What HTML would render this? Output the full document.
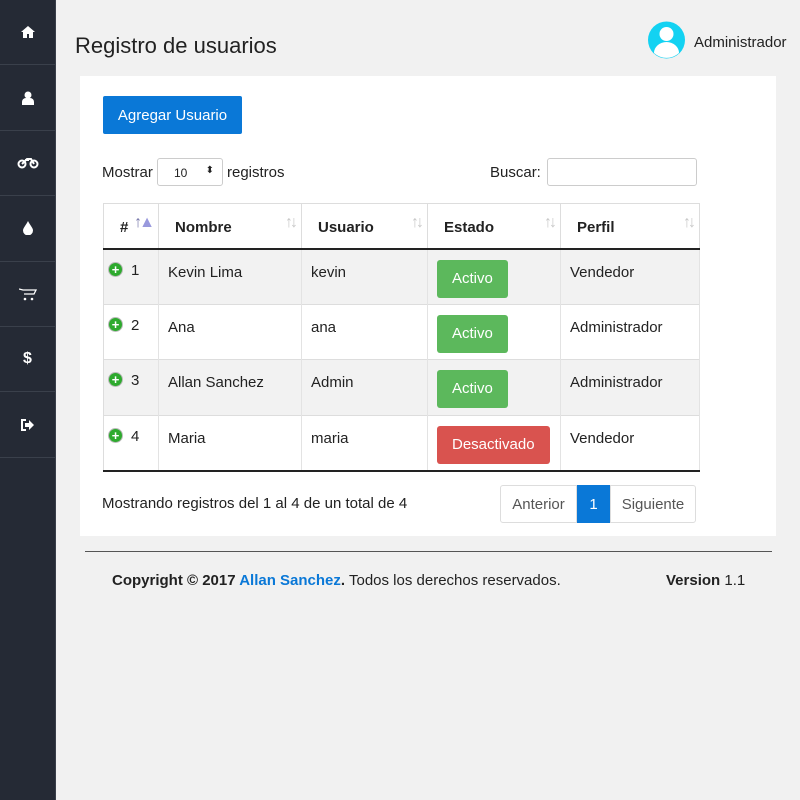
<!DOCTYPE html>
<html><head><meta charset="utf-8"><style>
*{box-sizing:border-box;margin:0;padding:0}
body{width:800px;height:800px;background:#f1f1f1;font-family:"Liberation Sans",sans-serif;color:#222;position:relative;overflow:hidden}
.sb{position:absolute;left:0;top:0;width:56px;height:800px;background:#252a35;border-right:1px solid #3a3f4a}
.sb div{height:65.4px;border-bottom:1px solid #3a404b;display:flex;align-items:center;justify-content:center;color:#fff;font-size:14px;font-weight:bold}
h1{position:absolute;left:75px;top:33px;font-size:22px;font-weight:normal;color:#222}
.user{position:absolute;left:648px;top:20px;display:flex;align-items:center;font-size:15px}
.card{position:absolute;left:80px;top:76px;width:696px;height:460px;background:#fff}
.btn{position:absolute;left:23px;top:20px;width:139px;height:38px;background:#0a78d7;color:#fff;font-size:15px;display:flex;align-items:center;justify-content:center;border-radius:2px}
.abs{position:absolute;font-size:15px}
table{position:absolute;left:23px;top:127px;width:597px;border-collapse:collapse;font-size:15px}
th{height:45px;text-align:left;font-weight:bold;border-bottom:2px solid #222;border-top:1px solid #ddd;border-right:1px solid #ddd;padding-left:16px;padding-top:3px;position:relative}
th .s{position:absolute;right:6px;top:10px;color:#c8c8c8;font-size:16px;font-weight:normal;letter-spacing:-3px}
td{height:55.5px;vertical-align:top;padding:14px 0 0 9px;border-right:1px solid #e3e3e3;border-top:1px solid #ddd}
tr:nth-child(odd) td{background:#f2f2f2}
tbody tr:last-child td{border-bottom:2px solid #222}
th:first-child,td:first-child{border-left:1px solid #ddd}
.pl{display:inline-block;width:15px;height:15px;border-radius:50%;background:#2eaa2e;border:1px solid #bbb;color:#fff;font-size:13px;line-height:13px;text-align:center;font-weight:bold;margin-right:8px;vertical-align:1px}
td:first-child{padding-left:4px;padding-top:12px}
.st{display:inline-block;height:38px;line-height:38px;padding:0 15px;color:#fff;border-radius:3px;margin-top:-4px}
.pg{position:absolute;top:409px;height:38px;border:1px solid #ddd;display:flex;align-items:center;justify-content:center;font-size:15px;color:#555}
</style></head><body>
<div class="sb">
<div><svg width="14" height="12" viewBox="0 0 14 12"><path d="M7 0L0 6h2v6h4V8h2v4h4V6h2z" fill="#fff"/></svg></div>
<div><svg width="12" height="14" viewBox="0 0 12 14"><circle cx="6" cy="4" r="3.5" fill="#fff"/><path d="M0 14v-3a4 4 0 0 1 4-4h4a4 4 0 0 1 4 4v3z" fill="#fff"/></svg></div>
<div><svg width="22" height="12" viewBox="0 0 22 12"><circle cx="5" cy="7" r="3.5" fill="none" stroke="#fff" stroke-width="2"/><circle cx="17" cy="7" r="3.5" fill="none" stroke="#fff" stroke-width="2"/><path d="M5 7l5-5h4l3 5M8 3h4" stroke="#fff" stroke-width="2" fill="none"/></svg></div>
<div><svg width="10" height="14" viewBox="0 0 10 14"><path d="M5 0C3 4 0 7 0 9.5a5 5 0 0 0 10 0C10 7 7 4 5 0z" fill="#fff"/></svg></div>
<div><svg width="18" height="14" viewBox="0 0 18 14"><path d="M0 2l4 1h13l-2 4H5" stroke="#fff" stroke-width="1.3" fill="none"/><circle cx="6" cy="12" r="1.3" fill="#fff"/><circle cx="13" cy="12" r="1.3" fill="#fff"/></svg></div>
<div style="font-size:16px">$</div>
<div><svg width="14" height="12" viewBox="0 0 14 12"><path d="M5 1H1v10h4" stroke="#fff" stroke-width="2" fill="none"/><path d="M4 4h4V1l5 5-5 5V8H4z" fill="#fff"/></svg></div>
</div>
<h1>Registro de usuarios</h1>
<div class="user"><svg width="37" height="40" viewBox="0 0 37 40"><circle cx="18.5" cy="20" r="18.5" fill="#13d2f2"/><circle cx="18.5" cy="14" r="7" fill="#fff"/><path d="M6 33a12.5 11 0 0 1 25 0a18.5 18.5 0 0 1-25 0z" fill="#fff"/></svg><span style="margin-left:9px;margin-top:4px">Administrador</span></div>
<div class="card">
<div class="btn">Agregar Usuario</div>
<div class="abs" style="left:22px;top:88px">Mostrar</div>
<div class="abs" style="left:77px;top:82px;width:66px;height:28px;border:1px solid #ccc;border-radius:3px;font-size:12px;padding:7px 0 0 16px">10 <span style="position:absolute;right:8px;top:6px;font-size:10px">⬍</span></div>
<div class="abs" style="left:147px;top:88px">registros</div>
<div class="abs" style="left:410px;top:88px">Buscar:</div>
<div class="abs" style="left:467px;top:82px;width:150px;height:28px;border:1px solid #ccc;border-radius:3px"></div>
<table>
<thead><tr><th style="width:55px">#<span class="s" style="color:#77a">↑<span style="color:#99d">▲</span></span></th><th style="width:143px">Nombre<span class="s">↑↓</span></th><th style="width:126px">Usuario<span class="s">↑↓</span></th><th style="width:133px">Estado<span class="s">↑↓</span></th><th>Perfil<span class="s">↑↓</span></th></tr></thead>
<tbody>
<tr><td><span class="pl">+</span>1</td><td>Kevin Lima</td><td>kevin</td><td><span class="st" style="background:#5cb85c">Activo</span></td><td>Vendedor</td></tr>
<tr><td><span class="pl">+</span>2</td><td>Ana</td><td>ana</td><td><span class="st" style="background:#5cb85c">Activo</span></td><td>Administrador</td></tr>
<tr><td><span class="pl">+</span>3</td><td>Allan Sanchez</td><td>Admin</td><td><span class="st" style="background:#5cb85c">Activo</span></td><td>Administrador</td></tr>
<tr><td><span class="pl">+</span>4</td><td>Maria</td><td>maria</td><td><span class="st" style="background:#d9534f">Desactivado</span></td><td>Vendedor</td></tr>
</tbody></table>
<div class="abs" style="left:22px;top:419px">Mostrando registros del 1 al 4 de un total de 4</div>
<div class="pg" style="left:420px;width:77px;border-radius:3px 0 0 3px">Anterior</div>
<div class="pg" style="left:497px;width:33px;background:#0a78d7;color:#fff;border-color:#0a78d7">1</div>
<div class="pg" style="left:530px;width:86px;border-radius:0 3px 3px 0">Siguiente</div>
</div>
<div style="position:absolute;left:85px;top:551px;width:687px;border-top:1px solid #555"></div>
<div class="abs" style="left:112px;top:572px"><b>Copyright © 2017 <span style="color:#0a78d7">Allan Sanchez</span>.</b> Todos los derechos reservados.</div>
<div class="abs" style="left:666px;top:572px"><b>Version</b> 1.1</div>
</body></html>
